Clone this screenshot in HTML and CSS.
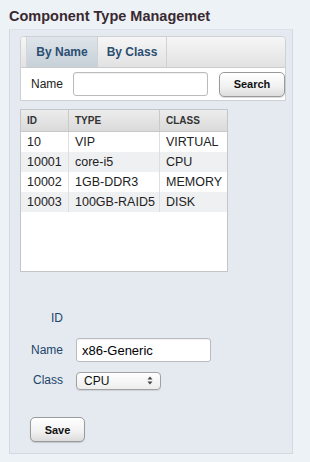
FILE: index.html
```html
<!DOCTYPE html>
<html lang="en">

<head>
    <meta charset="UTF-8" />
    <meta name="viewport" content="width=device-width, initial-scale=1.0" />
    <title>Component Type Management</title>
    <link rel="stylesheet" href="styles.css">
</head>

<body>

    <h1 class="page-title">Component Type Managemet</h1>

    <div class="panel">

        <!-- Search tabs -->
        <div class="tabs">
            <div class="tab-bar">
                <div class="tab active">By Name</div>
                <div class="tab">By Class</div>
            </div>
            <div class="tab-body">
                <label class="search-label" for="searchName">Name</label>
                <input type="text" id="searchName" class="text-input search-input" />
                <button class="btn search-btn">Search</button>
            </div>
        </div>

        <!-- Result list -->
        <div class="grid">
            <table>
                <thead>
                    <tr>
                        <th class="col-id">ID</th>
                        <th class="col-type">TYPE</th>
                        <th class="col-class">CLASS</th>
                    </tr>
                </thead>
                <tbody>
                    <tr><td>10</td><td>VIP</td><td>VIRTUAL</td></tr>
                    <tr><td>10001</td><td>core-i5</td><td>CPU</td></tr>
                    <tr><td>10002</td><td>1GB-DDR3</td><td>MEMORY</td></tr>
                    <tr><td>10003</td><td>100GB-RAID5</td><td>DISK</td></tr>
                </tbody>
            </table>
        </div>

        <!-- Edit form -->
        <form class="edit-form">
            <label class="form-label id-label">ID</label>
            <span class="id-value"></span>

            <label class="form-label" for="typeName">Name</label>
            <input type="text" id="typeName" class="text-input name-input" value="x86-Generic" />

            <label class="form-label" for="typeClass">Class</label>
            <div class="select-wrap">
                <select id="typeClass" class="select">
                    <option>VIRTUAL</option>
                    <option selected>CPU</option>
                    <option>MEMORY</option>
                    <option>DISK</option>
                </select>
                <svg class="select-arrows" width="6" height="9" viewBox="0 0 6 9">
                    <path d="M0.5 3.5 L3 0.5 L5.5 3.5 Z M0.5 5.5 L3 8.5 L5.5 5.5 Z" fill="#444" />
                </svg>
            </div>
        </form>

        <button class="btn save-btn">Save</button>
    </div>

</body>

</html>
```

FILE: styles.css
```css
body {
    margin: 0;
    background: #edf2f7;
    font-family: 'Liberation Sans', Arial, sans-serif;
    color: #222;
}

.page-title {
    margin: 0;
    padding: 8px 0 0 9px;
    font-size: 14.5px;
    line-height: 16px;
    font-weight: bold;
    color: #3a2930;
}

.panel {
    margin: 5px 17px 0 9px;
    padding: 6px 6px 11px 10px;
    background: #e4eaf0;
    border: 1px solid #d2d9e0;
    border-top-color: #dde3e9;
}

/* tabs */

.tabs {
    width: 266px;
    box-sizing: border-box;
    border: 1px solid #cdd1d5;
    border-radius: 4px 4px 0 0;
    background: #fff;
}

.tab-bar {
    display: flex;
    height: 30px;
    padding-left: 5px;
    background: linear-gradient(#f6f6f6, #e2e2e2);
    border-bottom: 1px solid #c9cccf;
    border-radius: 4px 4px 0 0;
}

.tab {
    height: 30px;
    line-height: 31px;
    font-size: 12px;
    font-weight: bold;
    color: #2b4e72;
    text-align: center;
    border-right: 1px solid #cfd2d5;
}

.tab:first-child {
    width: 70px;
    border-left: 1px solid #d4d7da;
}

.tab:last-child {
    width: 68px;
}

.tab.active {
    background: linear-gradient(#dfe5ea, #c6d0d8);
}

.tab-body {
    display: flex;
    align-items: center;
    height: 32px;
    padding-left: 10px;
}

.search-label {
    font-size: 12px;
    color: #222;
    width: 42px;
}

.text-input {
    box-sizing: border-box;
    height: 24px;
    border: 1px solid #b9bcbf;
    border-radius: 3px;
    background: #fff;
    font-family: inherit;
    font-size: 13px;
    padding: 0 5px;
    box-shadow: inset 0 1px 1px rgba(0, 0, 0, 0.06);
}

.search-input {
    width: 135px;
}

.btn {
    box-sizing: border-box;
    height: 25px;
    border: 1px solid #9a9a9a;
    border-radius: 5px;
    background: linear-gradient(#ffffff, #f1f1f1 60%, #dcdcdc);
    box-shadow: 0 1px 1px rgba(0, 0, 0, 0.15);
    font-family: inherit;
    font-size: 11px;
    font-weight: bold;
    color: #111;
    padding: 0;
}

.search-btn {
    width: 66px;
    margin-left: 11px;
}

/* result grid */

.grid {
    box-sizing: border-box;
    width: 208px;
    height: 163px;
    margin-top: 8px;
    border: 1px solid #c3c6c9;
    background: #fff;
}

.grid table {
    width: 100%;
    border-collapse: collapse;
    font-size: 12.5px;
}

.grid th {
    height: 21px;
    padding: 0 0 0 6px;
    text-align: left;
    font-size: 10px;
    font-weight: bold;
    color: #333;
    background: linear-gradient(#ececec, #dadada);
    border-bottom: 1px solid #c8c8c8;
    border-right: 1px solid #cacaca;
}

.grid td {
    height: 20px;
    padding: 0 0 0 6px;
    color: #222;
    border-right: 1px solid #dedede;
    white-space: nowrap;
}

.grid th:last-child,
.grid td:last-child {
    border-right: none;
}

.grid tbody tr:nth-child(even) td {
    background: #eef0f2;
}

.col-id {
    width: 41px;
}

.col-type {
    width: 84px;
}

/* edit form */

.edit-form {
    display: grid;
    grid-template-columns: 43px auto;
    column-gap: 13px;
    align-items: center;
    margin-top: 36px;
}

.form-label {
    text-align: right;
    font-size: 12px;
    color: #22456a;
}

.id-label,
.id-value {
    height: 20px;
    line-height: 20px;
}

.name-input {
    width: 135px;
    height: 24px;
    margin-top: 10px;
}

.form-label[for="typeName"] {
    margin-top: 10px;
}

.form-label[for="typeClass"] {
    margin-top: 9px;
}

.select-wrap {
    position: relative;
    width: 85px;
    height: 18px;
    margin-top: 9px;
}

.select {
    appearance: none;
    -webkit-appearance: none;
    box-sizing: border-box;
    width: 85px;
    height: 18px;
    border: 1px solid #a2a2a2;
    border-radius: 4px;
    background: linear-gradient(#ffffff, #ededed);
    box-shadow: 0 1px 1px rgba(0, 0, 0, 0.1);
    font-family: inherit;
    font-size: 12px;
    color: #111;
    padding: 0 0 0 7px;
}

.select-arrows {
    position: absolute;
    right: 8px;
    top: 5px;
}

.save-btn {
    display: block;
    width: 55px;
    margin: 28px 0 0 10px;
}
```
